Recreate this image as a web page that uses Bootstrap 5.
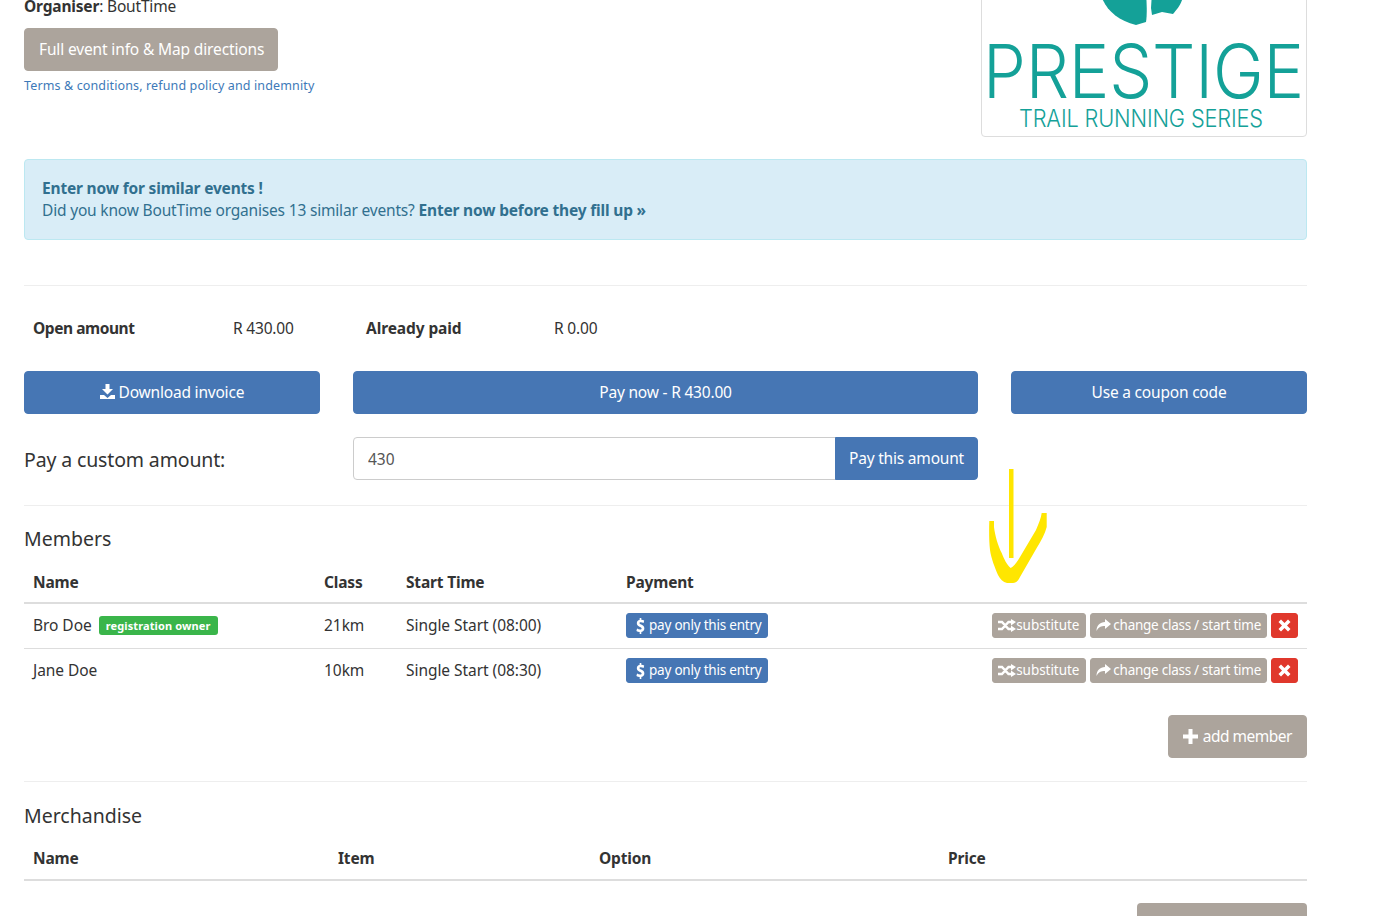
<!DOCTYPE html>
<html lang="en">
<head>
<meta charset="utf-8">
<title>Registration</title>
<link rel="stylesheet" href="https://cdn.jsdelivr.net/npm/bootstrap@5.3.0/dist/css/bootstrap.min.css">
<style>
html,body{height:916px;overflow:hidden;background:#fff}
body{font-family:"Noto Sans","Open Sans",sans-serif;font-size:15.5px;line-height:22px;color:#333;letter-spacing:-.18px}
.sheet{position:relative;margin:-70px 73px 0 24px;width:1283px}
.toprow{display:flex;justify-content:space-between;height:207px}
.orgline{padding-top:65px;height:98px}
.btn-tan,.btn-tan:hover{background:#aca49c;border:1px solid #aca49c;color:#fff}
.btn-blue,.btn-blue:hover{background:#4676b4;border:1px solid #4676b4;color:#fff}
.btn-lg-x{height:43px;padding:0 14px;font-size:15.5px;line-height:41px;border-radius:4px;letter-spacing:-.2px}
.btn-lg-x svg{vertical-align:-1px}
.fullinfo{letter-spacing:-.14px;padding:0 13px 0 14px}
.termslink{font-size:12.5px;color:#3d79b8;text-decoration:none;display:block;margin-top:4px;line-height:22px;letter-spacing:.13px}
.logobox{width:326px;height:207px;border:1px solid #ddd;border-radius:4px;position:relative;overflow:hidden;display:block}
.logobox svg{display:block}
.notice{height:81px;margin:22px 0 45px;padding:17px 17px;background:#d9edf7;border:1px solid #bce8f1;border-radius:4px;color:#31708f}
.notice b{font-weight:700}
.rule{border:0;border-top:1px solid #eee;margin:0;opacity:1}
.amounts{display:flex;height:85px;align-items:center;padding-left:9px;padding-bottom:2px}
.amounts b{font-weight:700}
.a1{width:200px;letter-spacing:-.45px}.a2{width:133px}.a3{width:188px;letter-spacing:-.1px}
.payrow{--bs-gutter-x:33px}
.custom-row{margin-top:23px;height:43px;align-items:center}
.customlabel{font-size:19.5px;padding-top:2px;letter-spacing:-.14px}
.customgroup{height:43px}
.customgroup .form-control{height:43px;border-radius:4px 0 0 4px;border-color:#ccc;padding-left:14px;color:#555;font-size:15.5px;box-shadow:none}
.customgroup .btn{width:143px;padding:0;border-radius:0 4px 4px 0}
.sectitle{font-size:19.5px;line-height:22px;font-weight:400;margin:0;letter-spacing:0}
.mtable{width:1283px;margin:0;table-layout:fixed;border-collapse:collapse}
.mtable th{font-weight:700;height:42px;padding:0 0 0 9px;border-bottom:2px solid #ddd;vertical-align:middle}
.merch th{height:43px}
.mtable td{height:45px;padding:0 0 0 9px;border-bottom:1px solid #ddd;vertical-align:middle;letter-spacing:-.05px}
.mtable td.txtcell{padding-bottom:2px}
.mtable tr:last-child td{border-bottom:0}
.ownerchip{display:inline-block;background:#3ab54a;color:#fff;font-size:11px;font-weight:700;line-height:13px;padding:3px 7px;border-radius:3px;margin-left:3px;letter-spacing:.12px;vertical-align:1px}
.btn-xs{display:inline-flex;align-items:center;height:25px;padding:0 5px;font-size:13.5px;line-height:23px;border-radius:3px;letter-spacing:-.22px}
.btn-blue.btn-xs{padding:0 6px 0 9px;gap:4px}
.btn-tan .gap2{margin-right:2px}
.subbtn{letter-spacing:-.05px;padding:0 6px 0 5px}
.chgbtn{letter-spacing:-.26px}
.btn-red,.btn-red:hover{background:#e0382c;border:1px solid #e0382c;color:#fff;width:27px;justify-content:center;padding:0}
.actions{display:flex;justify-content:flex-end;gap:4px;padding-right:9px}
.ico{fill:currentColor;flex:none}
.arrow{position:absolute;left:-24px;top:70px;pointer-events:none}
.addwrap{display:flex;justify-content:flex-end;margin-top:22px;height:43px}
.addbtn{letter-spacing:-.5px}
.addbtn svg{margin-right:5px;vertical-align:-2px}
.lastbtn{position:absolute;left:1113px;top:973px;width:170px;height:43px;background:#aca49c;border-radius:4px}
</style>
</head>
<body>
<div class="sheet">
  <div class="toprow">
    <div>
      <div class="orgline"><b>Organiser</b>: BoutTime</div>
      <a class="btn btn-tan btn-lg-x fullinfo" href="#">Full event info &amp; Map directions</a>
      <a class="termslink" href="#">Terms &amp; conditions, refund policy and indemnity</a>
    </div>
    <div class="logobox">
      <svg width="324" height="205" viewBox="982 -69 324 205">
        <path fill="#14a198" d="M1100 -8C1104 8 1116 20 1136 25L1146 22C1147 15 1147 8 1146 -8Z"/>
        <path fill="#14a198" d="M1152 -8L1151 8L1152 15L1162 12L1173 14C1178 8 1182 4 1184 -8Z"/>
        <text x="983" y="98" font-family="Inter,'Liberation Sans',sans-serif" font-weight="300" font-size="74" fill="#14a198" textLength="321" lengthAdjust="spacingAndGlyphs">PRESTIGE</text>
        <text x="1019" y="127" font-family="Inter,'Liberation Sans',sans-serif" font-weight="300" font-size="23.5" fill="#14a198" textLength="244" lengthAdjust="spacingAndGlyphs">TRAIL RUNNING SERIES</text>
      </svg>
    </div>
  </div>

  <div class="notice">
    <b>Enter now for similar events !</b><br>
    Did you know BoutTime organises 13 similar events? <b>Enter now before they fill up »</b>
  </div>
  <hr class="rule">

  <div class="amounts">
    <b class="a1">Open amount</b><span class="a2">R 430.00</span><b class="a3">Already paid</b><span>R 0.00</span>
  </div>

  <div class="row payrow">
    <div class="col-3"><a class="btn btn-blue btn-lg-x w-100" href="#"><svg class="ico" width="15" height="15" viewBox="0 0 15 15"><path d="M5.500 0h4v5h3.500L7.500 10.500 2 5h3.500zM0 11h4l3.500 3 3.500-3h4v4H0z"/></svg> Download invoice</a></div>
    <div class="col-6"><a class="btn btn-blue btn-lg-x w-100" href="#">Pay now - R 430.00</a></div>
    <div class="col-3"><a class="btn btn-blue btn-lg-x w-100" href="#">Use a coupon code</a></div>
  </div>

  <div class="row payrow custom-row">
    <div class="col-3 customlabel">Pay a custom amount:</div>
    <div class="col-6">
      <div class="input-group customgroup">
        <input class="form-control" type="text" value="430" aria-label="Custom amount">
        <a class="btn btn-blue btn-lg-x" href="#">Pay this amount</a>
      </div>
    </div>
  </div>

  <hr class="rule" style="margin-top:25px">
  <h2 class="sectitle" style="margin-top:22px">Members</h2>
  <table class="mtable" style="margin-top:11px">
    <colgroup><col style="width:291px"><col style="width:82px"><col style="width:220px"><col style="width:220px"><col></colgroup>
    <thead><tr><th>Name</th><th>Class</th><th>Start Time</th><th>Payment</th><th></th></tr></thead>
    <tbody>
      <tr>
        <td class="txtcell">Bro Doe <span class="ownerchip">registration owner</span></td><td class="txtcell">21km</td><td class="txtcell">Single Start (08:00)</td>
        <td><a class="btn btn-blue btn-xs" href="#"><svg class="ico" width="9" height="16" viewBox="0 0 11 16" preserveAspectRatio="none"><path d="M4.500 0h2v1.800c1.500.1 2.700.4 3.500.8L9.300 5C8.300 4.500 7 4.200 5.800 4.200c-1 0-1.600.3-1.600.9 0 .7.900 1 2.200 1.500 2.400.8 3.800 1.700 3.800 3.800 0 1.900-1.300 3.200-3.700 3.500V16h-2v-1.900c-1.600-.1-3-.5-4-1.100l.8-2.500c1.100.6 2.500 1.100 3.800 1.100 1.100 0 1.800-.4 1.800-1.100s-.7-1.100-2.100-1.600C2.500 8.100 1 7.200 1 5.200c0-1.800 1.300-3.100 3.500-3.400z"/></svg><span>pay only this entry</span></a></td>
        <td><div class="actions">
          <a class="btn btn-tan btn-xs subbtn" href="#"><svg class="ico" width="18" height="13" viewBox="0 0 18 13"><path d="M0 3h4l6.500 7H14M0 10h4l6.500-7H14" fill="none" stroke="currentColor" stroke-width="2.500"/><path d="M13 0l5 3-5 3.500zM13 6.500l5 3.500-5 3z"/></svg>substitute</a>
          <a class="btn btn-tan btn-xs chgbtn" href="#"><svg class="ico gap2" width="15" height="13" viewBox="0 0 15 13"><path d="M9 0l6 5-6 5V7C5 7 2.500 8 .5 12 .5 6.500 4 3 9 3z"/></svg>change class / start time</a>
          <a class="btn btn-xs btn-red" href="#" aria-label="Remove"><svg class="ico" width="13" height="13" viewBox="0 0 13 13"><path d="M3 .5L6.500 4 10 .5 12.500 3 9 6.500l3.500 3.500L10 12.500 6.500 9 3 12.500.5 10 4 6.500.5 3z"/></svg></a>
        </div></td>
      </tr>
      <tr>
        <td class="txtcell">Jane Doe</td><td class="txtcell">10km</td><td class="txtcell">Single Start (08:30)</td>
        <td><a class="btn btn-blue btn-xs" href="#"><svg class="ico" width="9" height="16" viewBox="0 0 11 16" preserveAspectRatio="none"><path d="M4.500 0h2v1.800c1.500.1 2.700.4 3.500.8L9.300 5C8.300 4.500 7 4.200 5.800 4.200c-1 0-1.600.3-1.600.9 0 .7.900 1 2.200 1.500 2.400.8 3.800 1.700 3.800 3.800 0 1.900-1.300 3.200-3.700 3.500V16h-2v-1.900c-1.600-.1-3-.5-4-1.100l.8-2.500c1.100.6 2.500 1.100 3.800 1.100 1.100 0 1.800-.4 1.800-1.100s-.7-1.100-2.100-1.600C2.500 8.100 1 7.200 1 5.200c0-1.800 1.300-3.100 3.500-3.400z"/></svg><span>pay only this entry</span></a></td>
        <td><div class="actions">
          <a class="btn btn-tan btn-xs subbtn" href="#"><svg class="ico" width="18" height="13" viewBox="0 0 18 13"><path d="M0 3h4l6.500 7H14M0 10h4l6.500-7H14" fill="none" stroke="currentColor" stroke-width="2.500"/><path d="M13 0l5 3-5 3.500zM13 6.500l5 3.500-5 3z"/></svg>substitute</a>
          <a class="btn btn-tan btn-xs chgbtn" href="#"><svg class="ico gap2" width="15" height="13" viewBox="0 0 15 13"><path d="M9 0l6 5-6 5V7C5 7 2.500 8 .5 12 .5 6.500 4 3 9 3z"/></svg>change class / start time</a>
          <a class="btn btn-xs btn-red" href="#" aria-label="Remove"><svg class="ico" width="13" height="13" viewBox="0 0 13 13"><path d="M3 .5L6.500 4 10 .5 12.500 3 9 6.500l3.500 3.500L10 12.500 6.500 9 3 12.500.5 10 4 6.500.5 3z"/></svg></a>
        </div></td>
      </tr>
    </tbody>
  </table>

  <div class="addwrap"><a class="btn btn-tan btn-lg-x addbtn" href="#"><svg class="ico" width="15" height="15" viewBox="0 0 15 15"><path d="M5.500 0h4v5.500H15v4H9.500V15h-4V9.500H0v-4h5.500z"/></svg>add member</a></div>
  <hr class="rule" style="margin-top:23px">
  <h2 class="sectitle" style="margin-top:23px">Merchandise</h2>
  <table class="mtable merch" style="margin-top:10px">
    <colgroup><col style="width:305px"><col style="width:261px"><col style="width:349px"><col></colgroup>
    <thead><tr><th>Name</th><th>Item</th><th>Option</th><th>Price</th></tr></thead>
  </table>
  <div class="lastbtn"></div>

  <svg class="arrow" width="1380" height="916" viewBox="0 0 1380 916" aria-hidden="true">
    <rect x="1009" y="469" width="4.500" height="89" fill="#ffe600"/>
    <path fill="#ffe600" d="M989.300 521H994V527C995 535 998 546 1001.700 553C1004 559 1007 565 1010.700 568C1014 566 1017 562 1020 557L1036 530C1039 523 1041 518 1041.700 513H1046.700V527C1045 534 1041 541 1036.700 548L1020 577C1018 581 1016 583 1013 583H1007C1003 582 1000 579 998 575C995 568 991 558 990 550C989 541 989 530 989.300 521Z"/>
  </svg>
</div>
<script src="https://cdn.jsdelivr.net/npm/bootstrap@5.3.0/dist/js/bootstrap.bundle.min.js"></script>
</body>
</html>
